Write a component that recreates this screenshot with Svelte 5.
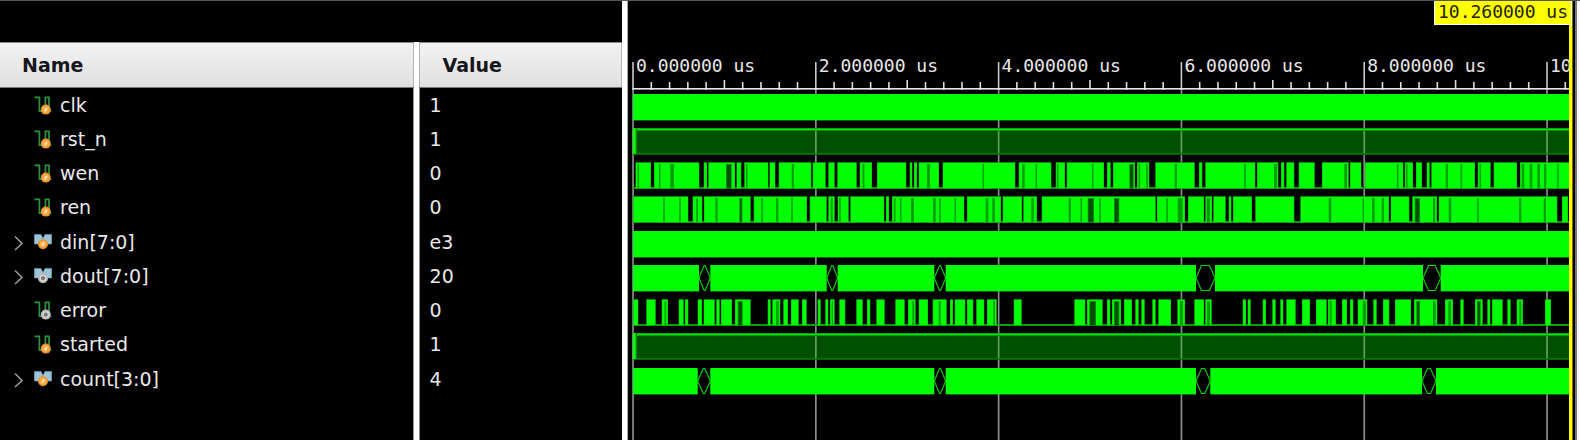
<script>
  const VIEW = 947;
  const START = 5;
  const END = 942;
  const PER_2US = 182.8;

  const majors = [0, 1, 2, 3, 4, 5].map((i) => ({
    x: START + i * PER_2US,
    label: `${i * 2}.000000 us`
  }));

  const minors = [];
  for (let i = 1; START + (i * PER_2US) / 10 < END; i++) {
    if (i % 10 !== 0) minors.push({ x: START + (i * PER_2US) / 10, mid: i % 5 === 0 });
  }

  // Turns the list of low intervals into the list of high ones.
  function highsFrom(lows) {
    const out = [];
    let at = START;
    for (const [a, b] of lows) {
      if (a > at) out.push([at, a]);
      at = b;
    }
    if (at < END) out.push([at, END]);
    return out;
  }

  const thin = (...xs) => xs.map((x) => [x - 0.8, x + 0.8]);

  const wenLow = [
    [5, 7.5], [23, 26], [71.3, 75.7], [79, 80.3], [107, 108.5], [113.3, 116.3], [140.3, 141.5],
    [147.3, 150.7], [183.3, 184.7], [197.7, 200.3], [206.7, 209.3], [228.7, 231.7], [244, 249],
    [278.3, 281.7], [284.3, 286], [289, 290.7], [311, 314.7], [387.3, 390.7], [423.3, 427.7],
    [437, 438.7], [476, 479], [482.7, 485], [507, 509], [521.3, 527.3], [566.7, 571],
    [574.3, 577.3], [627.3, 629], [650.3, 653], [656.3, 658.3], [666.3, 670.7], [686.7, 694],
    [720.7, 722], [733.3, 737], [775.3, 776.7], [785, 788], [794, 798.7], [801.7, 803.3],
    [847, 849.7], [862.7, 865.7], [889, 892]
  ];
  const wenBusy = [
    ...thin(10.3, 31.7, 118.7, 355.3, 408.3, 429.7, 464.7, 511.3, 519, 617, 769.7, 778.7, 833.3, 852.3, 930),
    [42.3, 46], [163.7, 166], [234.5, 236.5], [299, 302], [394.3, 396.7], [546.7, 549], [646, 649],
    [716.3, 719], [817.7, 820], [893.7, 896.3], [901.7, 904.3], [909.3, 912], [916, 918.3]
  ];
  const wenDense = [[98, 103.7], [501.3, 505.7]];

  const renLow = [
    [60.3, 64.7], [74.3, 76], [122.7, 125.7], [179, 181.7], [198.7, 200.3], [206.7, 209.7],
    [220.7, 222.3], [256.3, 258], [261, 264], [336.3, 339], [373, 374.7], [394, 395.3],
    [409, 413.7], [527.7, 529], [557, 560], [576, 577.3], [584, 585.3], [597.7, 600.7],
    [603.3, 605], [624, 627.3], [666.3, 672.3], [761, 762.7], [781.3, 784.3], [809, 810.7],
    [929.3, 934], [940, 942]
  ];
  const renBusy = [
    ...thin(36, 52, 69, 134, 164, 212, 266.7, 272.7, 312, 327.3, 453.3, 472, 539, 735.3, 850),
    [87.3, 89.7], [148, 150.3], [202.7, 204.7], [283, 286], [305, 307.7], [357.7, 360.3],
    [364.3, 367], [403.3, 405.7], [440.7, 443], [549.7, 554.7], [578.7, 582], [700.7, 703.3],
    [744, 746.7], [753.7, 756], [805, 807.3], [820.7, 823.3], [891, 893.3], [915.7, 918]
  ];
  const renDense = [[111.3, 114.3], [459.7, 466], [486, 491.3], [786.7, 792]];

  const errorHigh = [
    [5, 10.3], [18.3, 27.7], [33.7, 40], [50.7, 55.7], [57, 60.3], [69.7, 74], [75.7, 86.7],
    [88.3, 91.7], [93, 104], [107, 122.7], [139.7, 142.7], [144.3, 152.3], [155.3, 160],
    [163, 170.7], [174, 178.7], [189.7, 192.7], [197.3, 200.3], [202, 206.7], [211.3, 217.3],
    [228.3, 234.7], [239, 242.3], [248.3, 256.7], [267.3, 276.7], [280, 287.7], [290.7, 300],
    [304.7, 318.7], [322, 325], [326.7, 337.3], [339, 345.3], [348.3, 356.3], [359, 368.7],
    [385.7, 393.7], [446.3, 457.3], [459, 474.7], [479, 482.3], [484, 493], [496, 504],
    [507.3, 510.7], [513.3, 516.7], [524.3, 527.7], [530.3, 543], [549.3, 557], [566.3, 576],
    [577.3, 583.7], [614.7, 618], [619.7, 622.7], [634.7, 638], [644.3, 647.7], [652.3, 655.3],
    [658.3, 667.7], [674, 682], [688, 698.7], [700, 708], [714, 719], [722, 725.3],
    [729.7, 739.3], [745.3, 748.7], [755, 761.3], [767, 783], [786, 809.3], [817, 825],
    [832.3, 835.7], [847, 854.7], [859.3, 862.3], [864, 874.7], [879.3, 882.7], [888.7, 895],
    [917, 923]
  ];
  const errorBusy = [
    [36.5, 38.3], [148, 150.7], [203.7, 205], [284.3, 286.3], [310.7, 312.7], [365.3, 367],
    [551.7, 555], [579, 582], [701.7, 703.7], [734.7, 738], [805, 807.7], [820.3, 823],
    [891.3, 893.3]
  ];
  const errorDense = [[109.7, 114.7], [461.3, 468], [486, 491.3], [788.3, 792], [849, 852.7]];

  const signals = [
    { name: 'clk', value: '1', icon: 'wire', badge: 'in', kind: 'bus', cross: [] },
    { name: 'rst_n', value: '1', icon: 'wire', badge: 'in', kind: 'hold' },
    { name: 'wen', value: '0', icon: 'wire', badge: 'in', kind: 'pulse', high: highsFrom(wenLow), busy: wenBusy, dense: wenDense },
    { name: 'ren', value: '0', icon: 'wire', badge: 'in', kind: 'pulse', high: highsFrom(renLow), busy: renBusy, dense: renDense },
    { name: 'din[7:0]', value: 'e3', icon: 'bus', badge: 'in', kind: 'bus', cross: [] },
    {
      name: 'dout[7:0]', value: '20', icon: 'bus', badge: 'out', kind: 'bus',
      cross: [[71, 82.3], [198.7, 209.7], [306.3, 317.7], [568, 587], [795, 812.7]]
    },
    { name: 'error', value: '0', icon: 'wire', badge: 'out', kind: 'pulse', high: errorHigh, busy: errorBusy, dense: errorDense },
    { name: 'started', value: '1', icon: 'wire', badge: 'in', kind: 'hold' },
    {
      name: 'count[3:0]', value: '4', icon: 'bus', badge: 'in', kind: 'bus',
      cross: [[69.7, 82.3], [306.3, 317.7], [568, 582.3], [794, 808]]
    }
  ];

  function hexagon([a, b]) {
    const slope = Math.min(5.5, (b - a) / 2 - 0.5);
    return `${a},19 ${a + slope},6.5 ${b - slope},6.5 ${b},19 ${b - slope},31.5 ${a + slope},31.5`;
  }
</script>

{#snippet badge(kind, x, y)}
  {#if kind === 'in'}
    <circle cx={x} cy={y} r="5" fill="#e8902c" />
    <circle cx={x} cy={y} r="3.6" fill="#ffac48" />
    <path d="M{x - 1} {y + 1.6}L{x + 1.1} {y - 1.6}" stroke="#ffe6c4" stroke-width="1.8" />
  {:else}
    <circle cx={x} cy={y} r="5" fill="#b9b9b9" />
    <circle cx={x} cy={y} r="3.4" fill="#d8d8d8" />
    <circle cx={x} cy={y} r="1.6" fill="#888" stroke="#5c5c5c" stroke-width="0.8" />
  {/if}
{/snippet}

<main class="viewer">
  <section class="signals" aria-label="Signals">
    <table>
      <thead>
        <tr><th class="name" scope="col">Name</th><th class="value" scope="col">Value</th></tr>
      </thead>
      <tbody>
        {#each signals as s}
          <tr>
            <td class="name">
              <div class="entry">
                {#if s.icon === 'bus'}
                  <button type="button" aria-label="Expand {s.name}">
                    <svg width="10" height="16" viewBox="0 0 10 16">
                      <path d="M1 1.5L8 8.5L1 15" fill="none" stroke="#999" stroke-width="1.6" />
                    </svg>
                  </button>
                {:else}
                  <span></span>
                {/if}
                <svg width="18" height="20" viewBox="0 0 18 20" aria-hidden="true">
                  {#if s.icon === 'wire'}
                    <path d="M0.4 1.4H5.4V15.2H11.4V1.4H15V15.2H17.4" fill="none" stroke="#2c9440" stroke-width="1.7" />
                    {@render badge(s.badge, 11.8, 13.6)}
                  {:else}
                    <path d="M0.4 1.4H7L9 5.5L11 1.4H17.6V11H0.4Z" fill="#9bc4d8" stroke="#6f9db3" stroke-width="0.6" />
                    {@render badge(s.badge, 9, 11.2)}
                  {/if}
                </svg>
                <span>{s.name}</span>
              </div>
            </td>
            <td class="value">{s.value}</td>
          </tr>
        {/each}
        <tr class="rest"><td class="name"></td><td class="value"></td></tr>
      </tbody>
    </table>
  </section>

  <div class="divider"></div>

  <section class="waves" aria-label="Waveforms">
    <svg class="grid" viewBox="0 0 {VIEW} 100" preserveAspectRatio="none" aria-hidden="true">
      {#each majors as m}
        <rect x={m.x - 0.8} y="0" width="1.7" height="100" fill="#8a8a8a" />
      {/each}
    </svg>

    <div class="ruler">
      <div class="labels">
        {#each majors as m}
          <span style="left: {(m.x / END) * 100}%">{m.label}</span>
        {/each}
      </div>
      <svg class="ticks" viewBox="0 0 {VIEW} 28" preserveAspectRatio="none" aria-hidden="true">
        {#each majors as m}
          <rect x={m.x - 0.8} y="0" width="1.6" height="28" fill="#c8c8c8" />
        {/each}
        {#each minors as t}
          <rect x={t.x - 0.8} y={t.mid ? 18 : 20} width="1.6" height="8" fill="#ddd" />
        {/each}
        <rect x={START} y="26" width={END - START} height="1.6" fill="#e6e6e6" />
      </svg>
    </div>

    <div class="rows">
      {#each signals as s}
        <svg viewBox="0 0 {VIEW} 34" preserveAspectRatio="none" role="img" aria-label={s.name}>
          {#if s.kind === 'hold'}
            <rect x={START} y="6" width={END - START} height="26.6" fill="#005000" />
            {#each majors as m}
              <rect x={m.x - 0.8} y="8" width="1.7" height="24" fill="#5fa05f" />
            {/each}
            <rect x={START} y="6" width={END - START} height="3" fill="#008c00" />
            <rect x={START} y="6.6" width={END - START} height="1.6" fill="#00e000" />
            <rect x={START} y="31.2" width={END - START} height="1.4" fill="#008000" />
            <rect x={START} y="6" width="4" height="26" fill="#008c00" />
            <rect x={START} y="6" width="2.6" height="26" fill="#00ff00" />
          {:else if s.kind === 'bus'}
            <rect x={START} y="6" width={END - START} height="26.4" fill="#00ff00" />
            {#each s.cross as c}
              <rect x={c[0]} y="5" width={c[1] - c[0]} height="28" fill="#000" />
              <polygon points={hexagon(c)} fill="#000" stroke="#00d800" stroke-width="1.1" />
            {/each}
          {:else}
            <rect x={START} y="31" width={END - START} height="1.9" fill="#00a800" />
            {#each s.high as [a, b]}
              <rect x={a} y="6.2" width={b - a} height="26.6" fill="#00b400" />
              <rect x={a + 0.5} y="7" width={Math.max(0.5, b - a - 1)} height="25" fill="#00ff00" />
            {/each}
            {#each s.busy as [a, b]}
              <rect x={a} y="8" width={b - a} height="24.6" fill="#00a000" />
            {/each}
            {#each s.dense as [a, b]}
              <rect x={a} y="8" width={b - a} height="24.6" fill="#009000" />
              <rect x={a + 0.8} y="9" width={b - a - 1.6} height="23.4" fill="#005000" />
            {/each}
          {/if}
        </svg>
      {/each}
    </div>

    <div class="cursor"></div>
    <output class="time">10.260000 us</output>
  </section>

  <div class="edge"></div>
</main>

<style>
  :global(body) {
    background: #000;
  }

  .viewer {
    display: grid;
    grid-template-columns: minmax(0, 622fr) 6px minmax(0, 947fr) 5px;
    min-height: 100vh;
    box-sizing: border-box;
    border-top: 1px solid #555;
    background: #000;
    color: #e8e8e8;
    font: 19px/34px 'DejaVu Sans', sans-serif;
  }

  .signals {
    display: flex;
    padding-top: 41px;
  }

  table {
    width: 100%;
    height: 100%;
    table-layout: fixed;
    border-collapse: separate;
    border-spacing: 0;
  }

  th,
  td {
    padding: 0;
    text-align: left;
    vertical-align: top;
    box-sizing: border-box;
  }

  th {
    height: 46px;
    padding-left: 22px;
    vertical-align: middle;
    color: #16161c;
    font-weight: bold;
    background: linear-gradient(#f3f3f3, #dfdfe1);
    box-shadow: inset 0 1px #888, inset 0 -1px #777, inset -1px 0 #b4b4b4;
  }

  td {
    padding-top: 1px;
    line-height: 33px;
  }

  .name {
    width: 67.3%;
    border-right: 5px solid #fff;
  }

  td.name {
    box-shadow: inset -1px 0 #999;
  }

  th.value {
    padding-left: 24px;
    box-shadow: inset 0 1px #888, inset 0 -1px #777, inset 1px 0 #b4b4b4, inset -1px 0 #b4b4b4;
  }

  td.value {
    padding-left: 11px;
    box-shadow: inset 1px 0 #888;
  }

  tbody tr {
    height: 34px;
  }

  tbody tr:nth-child(4n) {
    height: 35px;
  }

  tbody tr.rest {
    height: auto;
  }

  .entry {
    display: grid;
    grid-template-columns: 10px 20px 1fr;
    column-gap: 8px;
    align-items: center;
    height: 33px;
    padding-left: 14px;
  }

  .entry svg {
    display: block;
  }

  .entry > svg {
    margin-left: 2px;
  }

  button {
    padding: 0;
    border: 0;
    background: none;
    cursor: pointer;
  }

  .divider {
    box-sizing: border-box;
    border-right: 1px solid #aaa;
    background: #fff;
  }

  .waves {
    position: relative;
    overflow: hidden;
  }

  .grid {
    position: absolute;
    top: 87px;
    left: 0;
    width: 100%;
    height: 100%;
  }

  .ruler {
    position: relative;
    display: flex;
    align-items: flex-end;
    height: 89px;
    margin-bottom: -2px;
  }

  .ticks {
    width: 100%;
    height: 28px;
  }

  .labels {
    position: absolute;
    inset: 0 5px 0 0;
    overflow: hidden;
  }

  .labels span {
    position: absolute;
    top: 54px;
    padding-left: 3px;
    white-space: nowrap;
  }

  .labels,
  .time {
    font: 18px/22px 'DejaVu Sans Mono', monospace;
  }

  .rows {
    position: relative;
    display: grid;
    grid-template-rows: 34px 34px 34px 35px 34px 34px 34px 35px 34px;
  }

  .rows svg {
    display: block;
    width: 100%;
    height: 34px;
  }

  .cursor {
    position: absolute;
    top: 0;
    right: 2px;
    bottom: 0;
    box-sizing: border-box;
    width: 4px;
    background: #ff0;
    border-right: 1px solid #776f00;
  }

  .time {
    position: absolute;
    top: 0;
    right: 3px;
    padding: 0 3px 1px;
    white-space: nowrap;
    color: #222200;
    background: #ff0;
    border: 1px solid #fff;
    border-top: 0;
  }

  .edge {
    box-sizing: border-box;
    border-left: 2px solid #777;
    background: #fafafa;
  }
</style>
